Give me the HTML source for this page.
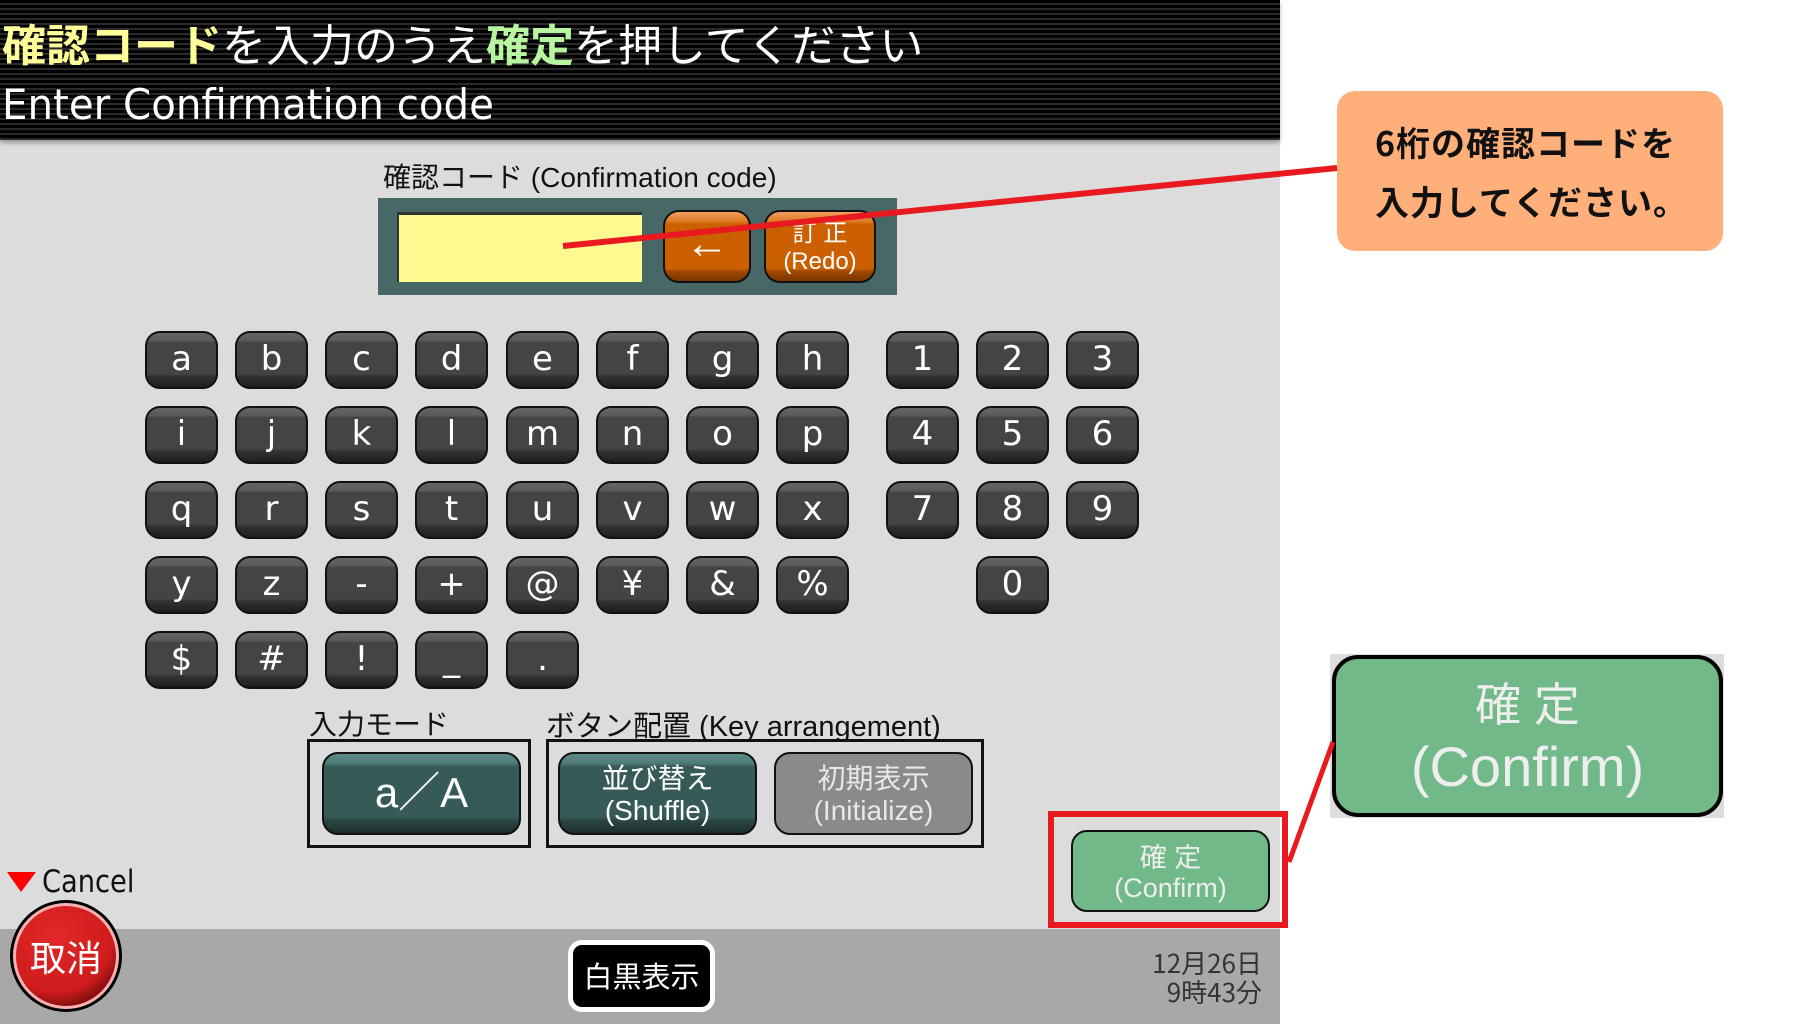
<!DOCTYPE html>
<html><head><meta charset="utf-8"><style>
*{margin:0;padding:0;box-sizing:border-box}
body{width:1794px;height:1024px;position:relative;background:#fff;font-family:"Liberation Sans","Noto Sans CJK JP",sans-serif;overflow:hidden}
.abs{position:absolute}
#main{left:0;top:0;width:1280px;height:929px;background:#dcdcdc}
#bar{left:0;top:929px;width:1280px;height:95px;background:#a8a8a8}
#hdr{left:0;top:0;width:1280px;height:140px;background:repeating-linear-gradient(#000 0,#000 3px,#2a2a2a 3px,#2a2a2a 5px);box-shadow:0 3px 4px rgba(0,0,0,.3)}
.t1{left:2px;top:14px;font-size:44px;color:#fff;white-space:nowrap;font-family:"Noto Sans CJK JP",sans-serif;line-height:56px}
.t2{left:2px;top:80px;font-size:42px;color:#fff;white-space:nowrap;line-height:50px;font-family:"DejaVu Sans","Liberation Sans",sans-serif;transform:scaleX(.96);transform-origin:left}
.key{position:absolute;width:73px;height:58px;border:2px solid #111;border-radius:15px;background:linear-gradient(#666 0,#5a5a5a 14%,#444 18%,#444 76%,#333 80%,#1e1e1e 100%);color:#fff;font-size:34px;text-align:center;line-height:52px;font-family:"DejaVu Sans",sans-serif}
.btn{position:absolute;border:2px solid #111;border-radius:16px;color:#fff;text-align:center;font-family:"Liberation Sans","Noto Sans CJK JP",sans-serif}
.teal{background:linear-gradient(#5c8c88 0,#4e7a77 12%,#365a57 16%,#365a57 80%,#2a4644 84%,#1d2f2e 100%)}
.lbl{font-size:28px;color:#111;white-space:nowrap;font-family:"Liberation Sans","Noto Sans CJK JP",sans-serif}
</style></head><body>
<div id="main" class="abs"></div>
<div id="bar" class="abs"></div>
<div id="hdr" class="abs"></div>
<div class="abs t1"><b style="color:#ffff99">確認コード</b>を入力のうえ<b style="color:#b8f5a0">確定</b>を押してください</div>
<div class="abs t2">Enter Confirmation code</div>

<div class="abs lbl" style="left:383px;top:156px;font-size:28px">確認コード (Confirmation code)</div>
<div class="abs" style="left:378px;top:198px;width:519px;height:97px;background:#476866"></div>
<div class="abs" style="left:397px;top:212px;width:245px;height:70px;background:#fff990;border-top:3px solid #333;border-left:2px solid #333"></div>
<div class="btn" style="left:663px;top:210px;width:88px;height:73px;background:linear-gradient(#f0a060 0,#e07820 14%,#cc6000 18%,#cc6000 82%,#a04800 86%,#7a3600 100%);font-size:44px;line-height:64px">&larr;</div>
<div class="btn" style="left:764px;top:210px;width:112px;height:73px;background:linear-gradient(#f0a060 0,#e07820 14%,#cc6000 18%,#cc6000 82%,#a04800 86%,#7a3600 100%);font-size:24px;line-height:28px;padding-top:8px">訂 正<br>(Redo)</div>

<div class="key" style="left:145px;top:331px">a</div><div class="key" style="left:235px;top:331px">b</div><div class="key" style="left:325px;top:331px">c</div><div class="key" style="left:415px;top:331px">d</div><div class="key" style="left:506px;top:331px">e</div><div class="key" style="left:596px;top:331px">f</div><div class="key" style="left:686px;top:331px">g</div><div class="key" style="left:776px;top:331px">h</div>
<div class="key" style="left:886px;top:331px">1</div><div class="key" style="left:976px;top:331px">2</div><div class="key" style="left:1066px;top:331px">3</div>
<div class="key" style="left:145px;top:406px">i</div><div class="key" style="left:235px;top:406px">j</div><div class="key" style="left:325px;top:406px">k</div><div class="key" style="left:415px;top:406px">l</div><div class="key" style="left:506px;top:406px">m</div><div class="key" style="left:596px;top:406px">n</div><div class="key" style="left:686px;top:406px">o</div><div class="key" style="left:776px;top:406px">p</div>
<div class="key" style="left:886px;top:406px">4</div><div class="key" style="left:976px;top:406px">5</div><div class="key" style="left:1066px;top:406px">6</div>
<div class="key" style="left:145px;top:481px">q</div><div class="key" style="left:235px;top:481px">r</div><div class="key" style="left:325px;top:481px">s</div><div class="key" style="left:415px;top:481px">t</div><div class="key" style="left:506px;top:481px">u</div><div class="key" style="left:596px;top:481px">v</div><div class="key" style="left:686px;top:481px">w</div><div class="key" style="left:776px;top:481px">x</div>
<div class="key" style="left:886px;top:481px">7</div><div class="key" style="left:976px;top:481px">8</div><div class="key" style="left:1066px;top:481px">9</div>
<div class="key" style="left:145px;top:556px">y</div><div class="key" style="left:235px;top:556px">z</div><div class="key" style="left:325px;top:556px">-</div><div class="key" style="left:415px;top:556px">+</div><div class="key" style="left:506px;top:556px">@</div><div class="key" style="left:596px;top:556px">¥</div><div class="key" style="left:686px;top:556px">&amp;</div><div class="key" style="left:776px;top:556px">%</div>
<div class="key" style="left:976px;top:556px">0</div>
<div class="key" style="left:145px;top:631px">$</div><div class="key" style="left:235px;top:631px">#</div><div class="key" style="left:325px;top:631px">!</div><div class="key" style="left:415px;top:631px">_</div><div class="key" style="left:506px;top:631px">.</div>

<div class="abs lbl" style="left:309px;top:703px">入力モード</div>
<div class="abs lbl" style="left:546px;top:703px;font-size:29px">ボタン配置 (Key arrangement)</div>
<div class="abs" style="left:307px;top:739px;width:224px;height:109px;border:3px solid #111"></div>
<div class="abs" style="left:546px;top:739px;width:438px;height:109px;border:3px solid #111"></div>
<div class="btn teal" style="left:322px;top:752px;width:199px;height:83px;font-size:42px;line-height:78px">a／A</div>
<div class="btn teal" style="left:558px;top:752px;width:199px;height:83px;font-size:28px;line-height:32px;padding-top:9px">並び替え<br>(Shuffle)</div>
<div class="btn" style="left:774px;top:752px;width:199px;height:83px;background:#8a8a8a;color:#e8e8e8;font-size:28px;line-height:32px;padding-top:9px">初期表示<br>(Initialize)</div>

<div class="abs" style="left:1048px;top:811px;width:240px;height:117px;border:6px solid #e8191f"></div>
<div class="btn" style="left:1071px;top:830px;width:199px;height:82px;background:#72b98a;color:#eee;font-size:27px;line-height:30px;padding-top:11px">確 定<br>(Confirm)</div>

<div class="abs" style="left:1330px;top:654px;width:394px;height:164px;background:#ddd"></div>
<div class="btn" style="left:1332px;top:655px;width:391px;height:162px;border:4px solid #000;border-radius:26px;background:#72b98a;color:#eee;font-size:56px;line-height:62px;padding-top:12px"><span style="font-size:46px">確 定</span><br>(Confirm)</div>

<div class="abs" style="left:1337px;top:91px;width:386px;height:160px;background:#feaf7a;border-radius:18px"></div>
<div class="abs" style="left:1375px;top:112px;font-size:34px;line-height:59px;font-weight:bold;color:#111;white-space:nowrap;font-family:'Noto Sans CJK JP',sans-serif;letter-spacing:1px">6桁の確認コードを<br>入力してください。</div>

<svg class="abs" style="left:0;top:0" width="1794" height="1024"><line x1="563" y1="246" x2="1337" y2="168" stroke="#e8191f" stroke-width="6"/><line x1="1289" y1="862" x2="1333" y2="742" stroke="#e8191f" stroke-width="5"/>
<polygon points="7,872 36,872 21,892" fill="#f00"/>
<defs><radialGradient id="rg" cx=".4" cy=".3" r=".7"><stop offset="0" stop-color="#e02828"/><stop offset=".8" stop-color="#d01c1c"/><stop offset="1" stop-color="#8a1010"/></radialGradient></defs>
<circle cx="66" cy="956" r="56" fill="#000"/><circle cx="66" cy="956" r="53" fill="#f8b0b0"/><circle cx="66" cy="956" r="50" fill="url(#rg)"/>
</svg>
<div class="abs" style="left:42px;top:864px;font-size:31px;color:#111;font-family:'DejaVu Sans',sans-serif;transform:scaleX(.88);transform-origin:left">Cancel</div>
<div class="abs" style="left:16px;top:933px;width:100px;text-align:center;font-size:36px;color:#fff;font-family:'Noto Sans CJK JP',sans-serif;line-height:46px">取消</div>

<div class="abs" style="left:568px;top:940px;width:147px;height:72px;background:#000;border:5px solid #fff;border-radius:14px;color:#fff;font-size:29px;text-align:center;line-height:60px;font-family:'Noto Sans CJK JP',sans-serif">白黒表示</div>
<div class="abs" style="left:1080px;top:948px;width:182px;text-align:right;font-size:26px;line-height:29px;color:#333;font-family:'Noto Sans CJK JP',sans-serif">12月26日<br>9時43分</div>
</body></html>
